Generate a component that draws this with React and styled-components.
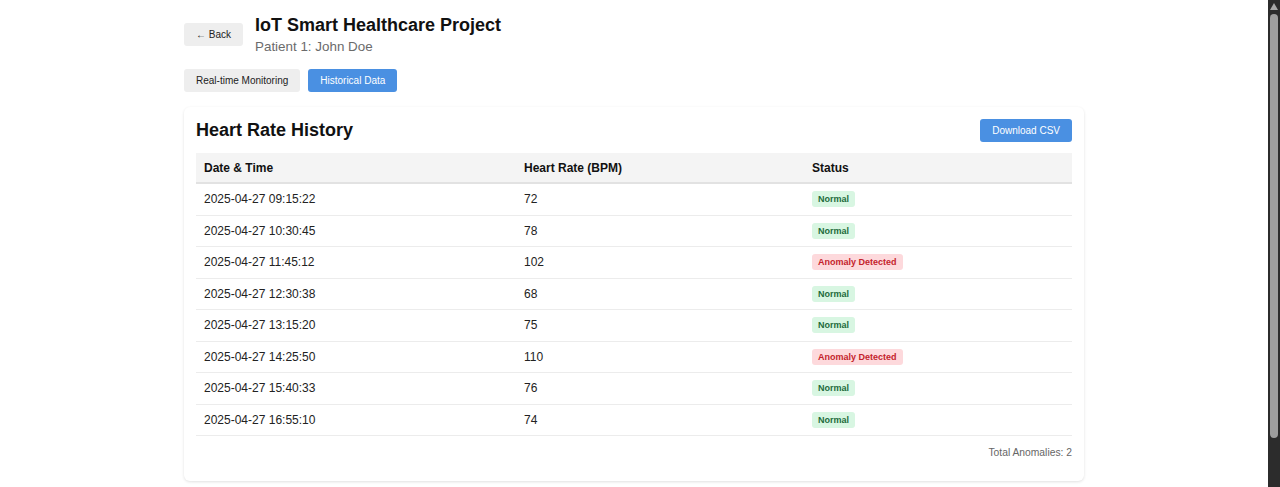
import React from 'react';
import styled, { createGlobalStyle } from 'styled-components';

const GlobalStyle = createGlobalStyle`
  html, body {
    margin: 0;
    padding: 0;
    background: #ffffff;
    font-family: "Liberation Sans", Arial, sans-serif;
    color: #111;
    overflow: hidden;
  }
`;

const Shell = styled.div`
  display: flex;
  height: 100vh;
`;

const Viewport = styled.main`
  flex: 1;
  overflow: hidden;
`;

const ScrollRail = styled.div`
  width: 12px;
  flex-shrink: 0;
  background: #2c2c2c;
  display: flex;
  flex-direction: column;
  align-items: center;
  padding-top: 3px;
`;

const Thumb = styled.div`
  margin-top: 4px;
  width: 8px;
  height: 424px;
  border-radius: 4px;
  background: #9e9e9e;
`;

const Page = styled.div`
  max-width: 900px;
  margin: 0 auto;
  padding: 15px 0 58px;
`;

const Header = styled.header`
  display: flex;
  align-items: center;
  gap: 12px;
`;

const TitleBlock = styled.div`
  display: flex;
  flex-direction: column;
  gap: 3px;
`;

const Title = styled.h1`
  margin: 0;
  font-size: 18px;
  font-weight: 700;
  line-height: 21px;
  color: #111;
`;

const Subtitle = styled.p`
  margin: 0;
  font-size: 13.4px;
  line-height: 15px;
  color: #6b6b6b;
`;

const Button = styled.button`
  font-family: inherit;
  font-size: 10px;
  line-height: 11px;
  padding: 6px 12px;
  border: none;
  border-radius: 3px;
  cursor: pointer;
  background: ${p => (p.$primary ? '#4a90e2' : '#eeeeee')};
  color: ${p => (p.$primary ? '#ffffff' : '#222222')};
`;

const Tabs = styled.nav`
  display: flex;
  gap: 8px;
  margin-top: 15px;
`;

const Card = styled.section`
  margin-top: 15px;
  background: #fff;
  border-radius: 6px;
  box-shadow: 0 1px 3px rgba(0, 0, 0, 0.12);
  padding: 12px 12px 11px;
`;

const CardHeader = styled.div`
  display: flex;
  align-items: center;
  justify-content: space-between;
  margin-bottom: 11px;
`;

const CardTitle = styled.h2`
  margin: 0;
  font-size: 18px;
  font-weight: 700;
  line-height: 21px;
  color: #111;
`;

const Table = styled.table`
  width: 100%;
  border-collapse: collapse;
  table-layout: fixed;
  font-size: 12px;
`;

const Th = styled.th`
  box-sizing: border-box;
  text-align: left;
  font-weight: 700;
  color: #111;
  background: #f4f4f4;
  height: 30px;
  padding: 0 8px;
  border-bottom: 2px solid #e2e2e2;
  width: ${p => p.$width || 'auto'};
`;

const Td = styled.td`
  height: 30.5px;
  padding: 0 8px;
  color: #222;
  border-bottom: 1px solid #ececec;
  vertical-align: middle;
`;

const Badge = styled.span`
  display: inline-block;
  vertical-align: middle;
  font-size: 9px;
  font-weight: 700;
  line-height: 16px;
  padding: 0 6px;
  border-radius: 3px;
  background: ${p => (p.$alert ? '#fdd9dc' : '#d8f6e2')};
  color: ${p => (p.$alert ? '#c4232c' : '#1d6b3b')};
`;

const Footer = styled.div`
  margin: 11px 0 11px;
  text-align: right;
  font-size: 10.3px;
  line-height: 12px;
  color: #666;
`;

const readings = [
  { time: '2025-04-27 09:15:22', bpm: 72 },
  { time: '2025-04-27 10:30:45', bpm: 78 },
  { time: '2025-04-27 11:45:12', bpm: 102 },
  { time: '2025-04-27 12:30:38', bpm: 68 },
  { time: '2025-04-27 13:15:20', bpm: 75 },
  { time: '2025-04-27 14:25:50', bpm: 110 },
  { time: '2025-04-27 15:40:33', bpm: 76 },
  { time: '2025-04-27 16:55:10', bpm: 74 },
];

const isAnomaly = bpm => bpm > 100 || bpm < 60;

export default function App() {
  const anomalies = readings.filter(r => isAnomaly(r.bpm)).length;

  return (
    <>
      <GlobalStyle />
      <Shell>
        <Viewport>
          <Page>
            <Header>
              <Button>← Back</Button>
              <TitleBlock>
                <Title>IoT Smart Healthcare Project</Title>
                <Subtitle>Patient 1: John Doe</Subtitle>
              </TitleBlock>
            </Header>

            <Tabs>
              <Button>Real-time Monitoring</Button>
              <Button $primary>Historical Data</Button>
            </Tabs>

            <Card>
              <CardHeader>
                <CardTitle>Heart Rate History</CardTitle>
                <Button $primary>Download CSV</Button>
              </CardHeader>

              <Table>
                <thead>
                  <tr>
                    <Th $width="320px">Date &amp; Time</Th>
                    <Th $width="288px">Heart Rate (BPM)</Th>
                    <Th>Status</Th>
                  </tr>
                </thead>
                <tbody>
                  {readings.map(r => (
                    <tr key={r.time}>
                      <Td>{r.time}</Td>
                      <Td>{r.bpm}</Td>
                      <Td>
                        {isAnomaly(r.bpm) ? (
                          <Badge $alert>Anomaly Detected</Badge>
                        ) : (
                          <Badge>Normal</Badge>
                        )}
                      </Td>
                    </tr>
                  ))}
                </tbody>
              </Table>

              <Footer>Total Anomalies: {anomalies}</Footer>
            </Card>
          </Page>
        </Viewport>

        <ScrollRail>
          <svg width="8" height="7" viewBox="0 0 8 7">
            <path d="M4 0 L8 7 L0 7 Z" fill="#a8a8a8" />
          </svg>
          <Thumb />
        </ScrollRail>
      </Shell>
    </>
  );
}
